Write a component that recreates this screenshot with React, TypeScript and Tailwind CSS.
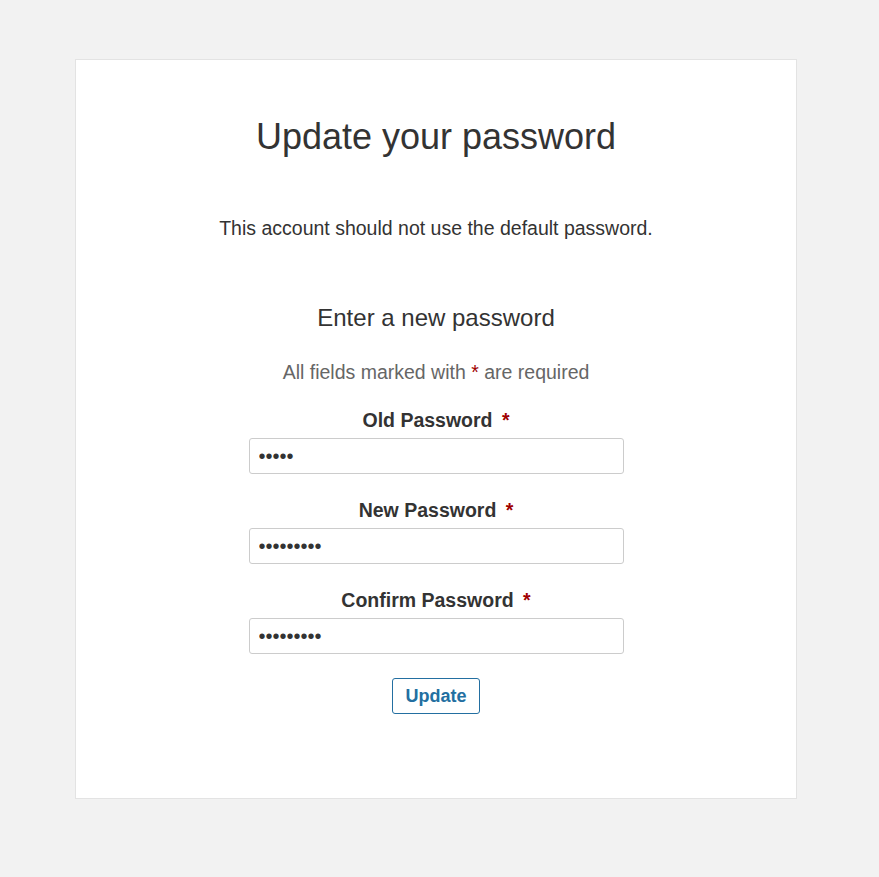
import React from "react";

function Field({ label, value, mt }: { label: string; value: string; mt: string }) {
  return (
    <div className={`flex flex-col items-center ${mt}`}>
      <label className="text-[19.5px] leading-[26px] font-bold text-[#333]">
        {label} <span className="ml-[4px] text-[#a00000]">*</span>
      </label>
      <input
        type="password"
        defaultValue={value}
        readOnly
        className="mt-[5px] w-[375px] h-[36px] border border-[#cccccc] rounded-[3px] px-[9px] text-[20px] text-[#333] bg-white outline-none"
      />
    </div>
  );
}

export default function App() {
  return (
    <div className="min-h-[877px] bg-[#f2f2f2] pt-[59px] pl-[75px] pb-[78px]" style={{ fontFamily: '"Liberation Sans", Arial, sans-serif' }}>
      <div className="w-[722px] h-[740px] bg-white border border-[#e3e3e3] flex flex-col items-center pt-[57px] text-[#333]">
        <h1 className="text-[36px] leading-[40px] font-normal">Update your password</h1>
        <p className="mt-[58px] text-[19.5px] leading-[26px]">This account should not use the default password.</p>
        <h2 className="mt-[61px] text-[24px] leading-[32px]">Enter a new password</h2>
        <p className="mt-[25px] text-[19.5px] leading-[26px] text-[#666]">
          All fields marked with <span className="text-[#a00000]">*</span> are required
        </p>
        <Field label="Old Password" value="abcde" mt="mt-[22px]" />
        <Field label="New Password" value="abcdefghi" mt="mt-[23px]" />
        <Field label="Confirm Password" value="abcdefghi" mt="mt-[23px]" />
        <button className="mt-[24px] w-[88px] h-[36px] border border-[#236fa1] rounded-[3px] text-[#236fa1] font-bold text-[18px] bg-white">
          Update
        </button>
      </div>
    </div>
  );
}
